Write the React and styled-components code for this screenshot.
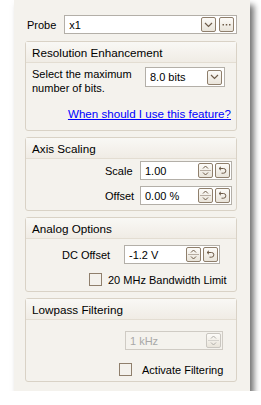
import styled, { createGlobalStyle } from 'styled-components';

const Global = createGlobalStyle`
  html, body {
    margin: 0;
    padding: 0;
    background: #ffffff;
    font-family: "Liberation Sans", Arial, sans-serif;
    font-size: 11px;
    color: #000;
  }
  * { box-sizing: border-box; }
`;

export default function App() {
  return (
    <>
      <Global />
      <Panel>
        <ProbeRow>
          <Label>Probe</Label>
          <ProbeInput>
            <FieldText>x1</FieldText>
            <SmallButton><Chevron /></SmallButton>
            <SmallButton>
              <svg width="9" height="3" viewBox="0 0 9 3">
                <rect x="0.5" y="1" width="1.5" height="1.5" fill="currentColor" />
                <rect x="3.75" y="1" width="1.5" height="1.5" fill="currentColor" />
                <rect x="7" y="1" width="1.5" height="1.5" fill="currentColor" />
              </svg>
            </SmallButton>
          </ProbeInput>
        </ProbeRow>

        <Group>
          <GroupHeader>Resolution Enhancement</GroupHeader>
          <ResBody>
            <ResRow>
              <ResText>Select the maximum<br />number of bits.</ResText>
              <Select>
                <FieldText>8.0 bits</FieldText>
                <SmallButton><Chevron /></SmallButton>
              </Select>
            </ResRow>
            <HelpLink href="#">When should I use this feature?</HelpLink>
          </ResBody>
        </Group>

        <Group>
          <GroupHeader>Axis Scaling</GroupHeader>
          <FieldBody $h={51} $top={2} $gap={6}>
            <FieldRow $right={4}>
              <Label $w={35}>Scale</Label>
              <SpinBox width={92} value="1.00" reset />
            </FieldRow>
            <FieldRow $right={4}>
              <Label $w={35}>Offset</Label>
              <SpinBox width={92} value="0.00 %" reset />
            </FieldRow>
          </FieldBody>
        </Group>

        <Group>
          <GroupHeader>Analog Options</GroupHeader>
          <FieldBody $h={52} $top={6} $gap={9}>
            <FieldRow $right={16}>
              <Label $w={62}>DC Offset</Label>
              <SpinBox width={96} value="-1.2 V" reset />
            </FieldRow>
            <CheckRow $left={63} $gap={6}>
              <Box />
              <span>20 MHz Bandwidth Limit</span>
            </CheckRow>
          </FieldBody>
        </Group>

        <Group>
          <GroupHeader>Lowpass Filtering</GroupHeader>
          <FieldBody $h={61} $top={11} $gap={13}>
            <FieldRow $right={13}>
              <SpinBox width={98} value="1 kHz" disabled />
            </FieldRow>
            <CheckRow $left={93} $gap={10}>
              <Box />
              <span>Activate Filtering</span>
            </CheckRow>
          </FieldBody>
        </Group>
      </Panel>
    </>
  );
}

function SpinBox({ width, value, reset, disabled }) {
  return (
    <Spin style={{ width }} $disabled={disabled}>
      <FieldText $disabled={disabled}>{value}</FieldText>
      <SmallButton $disabled={disabled}>
        <svg width="11" height="13" viewBox="0 0 11 13">
          <path d="M3 4.5 L5.5 2 L8 4.5 M3 8.5 L5.5 11 L8 8.5" fill="none" stroke="currentColor" strokeWidth="1" />
          <path d="M0 6.5 H11" stroke="currentColor" strokeOpacity="0.45" strokeWidth="1" />
        </svg>
      </SmallButton>
      {reset && (
        <SmallButton>
          <svg width="9" height="9" viewBox="0 0 9 9">
            <path d="M1 2.5 L3 0.8 M1 2.5 L3 4.2 M1 2.5 H5.5 A2.3 2.3 0 0 1 5.5 7.2 H3.5" fill="none" stroke="currentColor" strokeWidth="1" />
          </svg>
        </SmallButton>
      )}
    </Spin>
  );
}

function Chevron() {
  return (
    <svg width="9" height="6" viewBox="0 0 9 6">
      <path d="M1 1 L4.5 4.5 L8 1" fill="none" stroke="currentColor" strokeWidth="1.2" />
    </svg>
  );
}

const Panel = styled.div`
  margin-left: 14px;
  width: 236px;
  height: 391px;
  background: #f4f2ed;
  padding: 15px 13px 0 11px;
  box-shadow: 4px 5px 6px rgba(0, 0, 0, 0.55);
  display: flex;
  flex-direction: column;
  gap: 6px;
`;

const ProbeRow = styled.div`
  display: flex;
  align-items: center;
  gap: 8px;
  padding-left: 2px;
  height: 19px;
  margin-bottom: 1px;
  flex: none;
`;

const Label = styled.span`
  white-space: nowrap;
  width: ${(p) => (p.$w ? `${p.$w}px` : 'auto')};
  flex: none;
`;

const ProbeInput = styled.div`
  flex: 1;
  height: 19px;
  display: flex;
  align-items: center;
  gap: 3px;
  padding: 0 2px 0 4px;
  background: #fff;
  border: 1px solid #b3afa8;
`;

const FieldText = styled.span`
  flex: 1;
  color: ${(p) => (p.$disabled ? '#a8a8a8' : '#000')};
  white-space: nowrap;
`;

const SmallButton = styled.span`
  width: 15px;
  height: 15px;
  flex: none;
  display: flex;
  align-items: center;
  justify-content: center;
  border: 1px solid ${(p) => (p.$disabled ? '#c9c6c0' : '#8f7f6c')};
  border-radius: 2px;
  background: linear-gradient(#fcfbf8, #e9e4da);
  color: ${(p) => (p.$disabled ? '#b0aea9' : '#6e5c49')};
  overflow: hidden;
`;

const Group = styled.div`
  border: 1px solid #d9d2c6;
  border-radius: 3px;
  display: flex;
  flex-direction: column;
  flex: none;
`;

const GroupHeader = styled.div`
  height: 21px;
  display: flex;
  align-items: center;
  padding-left: 6px;
  font-size: 11.7px;
  background: linear-gradient(#f9f8f5, #f0ece5);
  border-bottom: 1px solid #e3ddd2;
`;

const ResBody = styled.div`
  height: 67px;
  padding: 4px 11px 0 6px;
`;

const ResRow = styled.div`
  display: flex;
  justify-content: space-between;
  align-items: flex-start;
`;

const ResText = styled.div`
  line-height: 14px;
  white-space: nowrap;
`;

const Select = styled.div`
  width: 80px;
  height: 20px;
  display: flex;
  align-items: center;
  padding: 0 2px 0 4px;
  background: #fff;
  border: 1px solid #b3afa8;
`;

const HelpLink = styled.a`
  display: block;
  text-align: right;
  line-height: 14px;
  margin-top: 12px;
  margin-right: -6px;
  color: #0000ff;
  text-decoration: underline;
  font-size: 11.6px;
  white-space: nowrap;
`;

const FieldBody = styled.div`
  height: ${(p) => p.$h}px;
  padding-top: ${(p) => p.$top}px;
  display: flex;
  flex-direction: column;
  gap: ${(p) => p.$gap}px;
`;

const FieldRow = styled.div`
  display: flex;
  align-items: center;
  justify-content: flex-end;
  padding-right: ${(p) => p.$right}px;
`;

const Spin = styled.div`
  height: 19px;
  display: flex;
  align-items: center;
  gap: 2px;
  padding: 0 1px 0 4px;
  background: ${(p) => (p.$disabled ? '#f4f2ed' : '#fff')};
  border: 1px solid ${(p) => (p.$disabled ? '#cfcbc4' : '#b3afa8')};
`;

const CheckRow = styled.div`
  display: flex;
  align-items: center;
  gap: ${(p) => p.$gap}px;
  padding-left: ${(p) => p.$left}px;
  white-space: nowrap;
`;

const Box = styled.span`
  width: 13px;
  height: 13px;
  border: 1px solid #8f7f6c;
  background: #f4f2ed;
  flex: none;
`;
